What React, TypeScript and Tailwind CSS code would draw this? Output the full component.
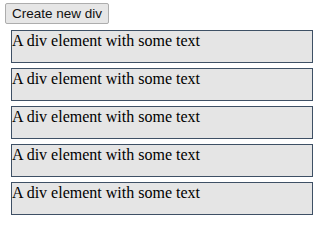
export default function App() {
  const items = [1, 2, 3, 4, 5];
  return (
    <div className="w-[324px] h-[230px] bg-white pt-[3px]">
      <button className="block ml-[5px] h-[21px] w-[104px] border border-[#adadad] bg-[#e6e6e6] rounded-[2px] text-[13.5px] leading-none text-[#111] font-['Liberation_Sans',Arial,sans-serif]">
        Create new div
      </button>
      <div className="mt-[6px] flex flex-col gap-[5px]">
        {items.map((i) => (
          <div
            key={i}
            className="ml-[11px] w-[302px] h-[33px] border border-[#3e5065] bg-[#e5e5e5] text-[16px] leading-[19px] text-black font-['Liberation_Serif','Times_New_Roman',serif]"
          >
            A div element with some text
          </div>
        ))}
      </div>
    </div>
  );
}
